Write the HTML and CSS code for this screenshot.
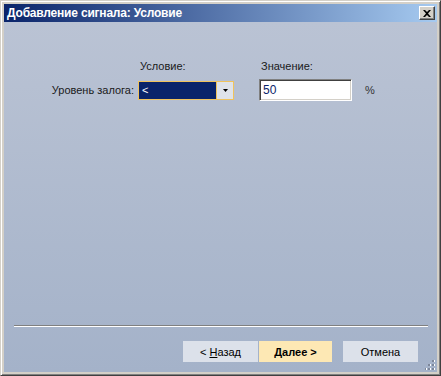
FILE: index.html
```html
<!DOCTYPE html>
<html lang="ru">
<head>
    <meta charset="UTF-8">
    <title>Добавление сигнала: Условие</title>
    <link rel="stylesheet" href="styles.css">
</head>
<body>
    <div class="window">
        <div class="titlebar">
            <span class="title">Добавление сигнала: Условие</span>
            <button class="close-btn" aria-label="Закрыть">
                <svg width="8" height="7" viewBox="0 0 8 7"><path d="M0 0h2l2 2 2-2h2L5 3.5 8 7H6L4 5 2 7H0l3-3.5z" fill="#000"/></svg>
            </button>
        </div>
        <div class="content">
            <div class="form">
                <span></span>
                <span class="col-head">Условие:</span>
                <span></span>
                <span class="col-head">Значение:</span>
                <span></span>

                <label class="row-label">Уровень залога:</label>
                <div class="combo">
                    <div class="combo-value">&lt;</div>
                    <div class="combo-btn">
                        <svg width="5" height="3" viewBox="0 0 5 3"><path d="M0 0h5L2.5 3z" fill="#000"/></svg>
                    </div>
                </div>
                <span></span>
                <div class="text-input">50</div>
                <span class="unit">%</span>
            </div>

            <div class="separator"></div>

            <div class="buttons">
                <button class="btn">&lt; <u>Н</u>азад</button>
                <button class="btn btn-default"><u>Д</u>алее &gt;</button>
                <button class="btn btn-cancel">Отмена</button>
            </div>

            <svg class="grip" width="11" height="11" viewBox="0 0 11 11">
                <rect x="8" y="0" width="2" height="2" fill="#fff"/>
                <rect x="4" y="4" width="2" height="2" fill="#fff"/>
                <rect x="8" y="4" width="2" height="2" fill="#fff"/>
                <rect x="0" y="8" width="2" height="2" fill="#fff"/>
                <rect x="4" y="8" width="2" height="2" fill="#fff"/>
                <rect x="8" y="8" width="2" height="2" fill="#fff"/>
                <rect x="7" y="0" width="2" height="2" fill="#7d879a"/>
                <rect x="3" y="4" width="2" height="2" fill="#7d879a"/>
                <rect x="7" y="4" width="2" height="2" fill="#7d879a"/>
                <rect x="-1" y="8" width="2" height="2" fill="#7d879a"/>
                <rect x="3" y="8" width="2" height="2" fill="#7d879a"/>
                <rect x="7" y="8" width="2" height="2" fill="#7d879a"/>
            </svg>
        </div>
    </div>
</body>
</html>
```

FILE: styles.css
```css
body {
    margin: 0;
    font-family: 'Liberation Sans', Arial, sans-serif;
    font-size: 11px;
    color: #000;
}

/* Окно диалога */
.window {
    width: 441px;
    height: 376px;
    box-sizing: border-box;
    border: 1px solid;
    border-color: #d4d0c8 #404040 #404040 #d4d0c8;
    box-shadow: inset 1px 1px #ffffff, inset -1px -1px #808080;
    background-color: #d4d0c8;
    padding: 3px;
    display: flex;
    flex-direction: column;
}

.titlebar {
    height: 18px;
    background: linear-gradient(to right, #0a246a, #a6caf0);
    display: flex;
    align-items: center;
    justify-content: space-between;
    padding: 0 2px 0 3px;
}

.title {
    color: #ffffff;
    font-weight: bold;
    font-size: 12px;
    letter-spacing: -0.2px;
}

.close-btn {
    width: 16px;
    height: 14px;
    padding: 0;
    background-color: #d4d0c8;
    border: 1px solid;
    border-color: #ffffff #404040 #404040 #ffffff;
    box-shadow: inset -1px -1px #808080;
    display: flex;
    align-items: center;
    justify-content: center;
}

.content {
    flex: 1;
    position: relative;
    background: linear-gradient(to bottom, #bac3d4, #a4b2c9);
    display: flex;
    flex-direction: column;
}

/* Форма */
.form {
    display: grid;
    grid-template-columns: 134px 96px 25px 93px auto;
    grid-template-rows: 16px 22px;
    row-gap: 5px;
    margin-top: 36px;
    align-items: center;
}

.col-head {
    padding-left: 2px;
    color: #1a1a1a;
}

.row-label {
    grid-column: 1;
    text-align: right;
    padding-right: 4px;
    color: #1a1a1a;
}

.combo {
    height: 19px;
    display: flex;
    border: 1px solid #f0c35c;
    box-sizing: border-box;
}

.combo-value {
    flex: 1;
    background-color: #0a246a;
    color: #ffffff;
    padding-left: 3px;
    line-height: 17px;
    border-right: 1px solid #f0c35c;
}

.combo-btn {
    width: 16px;
    background-color: #dfe3ea;
    display: flex;
    align-items: center;
    justify-content: center;
}

.text-input {
    height: 22px;
    box-sizing: border-box;
    background-color: #ffffff;
    border: 1px solid;
    border-color: #808080 #ffffff #ffffff #808080;
    box-shadow: inset 1px 1px #404040, inset -1px -1px #d4d0c8;
    padding-left: 3px;
    line-height: 20px;
    font-size: 12px;
    color: #0a246a;
}

.unit {
    padding-left: 13px;
    color: #333;
}

/* Разделитель и кнопки */
.separator {
    margin: auto 9px 0 10px;
    height: 1px;
    background-color: #808080;
    border-bottom: 1px solid #ffffff;
}

.buttons {
    display: flex;
    justify-content: flex-end;
    padding: 14px 19px 10px 0;
}

.btn {
    width: 75px;
    height: 21px;
    border: none;
    background-color: #dce1ea;
    font-family: inherit;
    font-size: 11px;
    color: #000;
    padding: 0;
}

.btn-default {
    width: 73px;
    margin-left: 1px;
    background-color: #fde8b4;
    font-weight: bold;
}

.btn-cancel {
    margin-left: 11px;
}

.grip {
    position: absolute;
    right: 1px;
    bottom: 1px;
}
```
